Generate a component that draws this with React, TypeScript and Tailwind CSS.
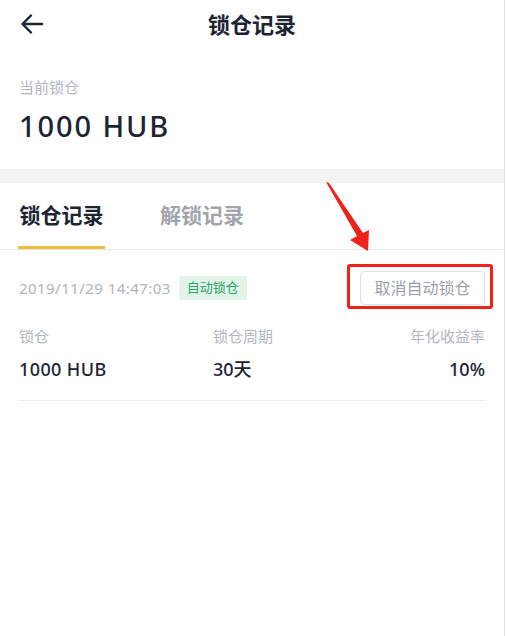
import React from "react";

const FONT = { fontFamily: '"Noto Sans", "Noto Sans CJK SC", sans-serif' };

function BackArrow() {
  return (
    <svg className="w-[24px] h-[24px]" viewBox="0 0 24 24" fill="none" stroke="#1c2333" strokeWidth="2.4" strokeLinecap="round" strokeLinejoin="round">
      <path d="M22 12H3" />
      <path d="m11 3.5-8.5 8.5 8.5 8.5" />
    </svg>
  );
}

export default function App() {
  return (
    <div className="relative w-[505px] min-h-[636px] bg-white border-r border-[#e2e2e2] text-[#1c2333]" style={FONT}>
      {/* header */}
      <div className="relative h-[48px] flex items-center justify-center">
        <button className="absolute left-[20px] top-[12px]">
          <BackArrow />
        </button>
        <h1 className="text-[22px] font-semibold leading-none">锁仓记录</h1>
      </div>

      {/* current */}
      <div className="px-[19px] pt-[29px] pb-[25px]">
        <p className="text-[15px] leading-[20px] text-[#b3b6bc]">当前锁仓</p>
        <p className="mt-[11px] text-[29px] leading-[36px] font-medium tracking-[1.9px]">1000 HUB</p>
      </div>

      <div className="h-[14px] bg-[#f3f3f3]" />

      {/* tabs */}
      <div className="flex gap-[55px] px-[18px] border-b border-[#e6e6e6]">
        <div className="flex flex-col items-center">
          <span className="pt-[22px] pb-[20px] text-[21px] leading-[21px] font-bold">锁仓记录</span>
          <div className="w-[87px] h-[3px] bg-[#f2bd3c]" />
        </div>
        <div className="flex flex-col items-center">
          <span className="pt-[22px] pb-[20px] text-[21px] leading-[21px] font-bold text-[#a1a4aa]">解锁记录</span>
          <div className="h-[3px]" />
        </div>
      </div>

      {/* record */}
      <div className="mx-[19px] pt-[21px] pb-[19px] border-b border-[#ececec]">
        <div className="flex items-center justify-between">
          <div className="flex items-center gap-[8px]">
            <span className="text-[15px] text-[#b1b4ba] tracking-[0.45px]">2019/11/29 14:47:03</span>
            <span className="h-[24px] px-[8px] flex items-center rounded-[2px] bg-[#e2f4ea] text-[13px] text-[#29a46b]">自动锁仓</span>
          </div>
          <button className="h-[34px] w-[125px] flex items-center justify-center rounded-[4px] border border-[#e1e1e4] text-[16px] text-[#9c9fa5]">
            取消自动锁仓
          </button>
        </div>

        <div className="mt-[21px] grid grid-cols-[194px_1fr_auto] text-[15px] leading-[20px] text-[#b3b6bc]">
          <span>锁仓</span>
          <span>锁仓周期</span>
          <span className="text-right">年化收益率</span>
        </div>
        <div className="mt-[11px] grid grid-cols-[194px_1fr_auto] text-[18px] leading-[24px] font-medium">
          <span className="tracking-[0.4px]">1000 HUB</span>
          <span>30天</span>
          <span className="text-right">10%</span>
        </div>
      </div>

      {/* annotation overlay */}
      <div className="absolute left-[347px] top-[264px] w-[146px] h-[45px] border-[3px] border-[#f0201a] rounded-[3px] pointer-events-none" />
      <svg className="absolute left-0 top-0 w-[505px] h-[636px] pointer-events-none" viewBox="0 0 505 636">
        <polygon
          points="326,182 329,183 363,233 369,230 368,251 350,240 357,236"
          fill="#f0201a"
        />
      </svg>
    </div>
  );
}
